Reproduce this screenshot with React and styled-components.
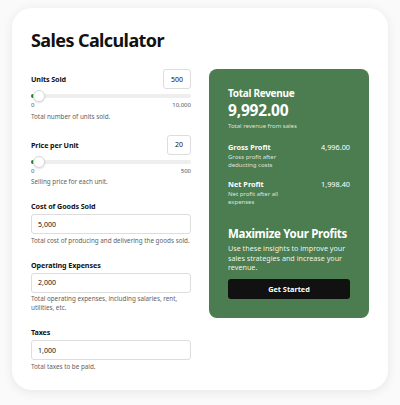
import React from 'react';
import styled, { createGlobalStyle } from 'styled-components';

const GlobalStyle = createGlobalStyle`
  body {
    margin: 0;
    background: #fafafa;
    font-family: "Noto Sans", "Open Sans", sans-serif;
    color: #111;
  }
`

const Page = styled.div`
  width: 400px;
  height: 405px;
  padding: 8px 12px;
  box-sizing: border-box;
`

const Card = styled.div`
  width: 376px;
  height: 382px;
  box-sizing: border-box;
  background: #fff;
  border-radius: 20px;
  box-shadow: 0 2px 12px rgba(0, 0, 0, 0.08);
  padding: 20px 19px;
`

const Title = styled.h1`
  margin: 0 0 17px;
  font-size: 18px;
  line-height: 24px;
  font-weight: 700;
  letter-spacing: -0.6px;
`

const Grid = styled.div`
  display: grid;
  grid-template-columns: 160px 160px;
  column-gap: 18px;
  align-items: start;
`

const Column = styled.div`
  display: flex;
  flex-direction: column;
  gap: 14px;
`

const Field = styled.div`
  display: flex;
  flex-direction: column;
`

const HeaderRow = styled.div`
  display: flex;
  justify-content: space-between;
  align-items: center;
  height: 20px;
`

const Label = styled.div`
  font-size: 7.2px;
  font-weight: 700;
  line-height: 12px;
  letter-spacing: -0.1px;
  margin-bottom: ${p => (p.$spaced ? '2px' : '0')};
`

const SmallInput = styled.div`
  width: ${p => p.$w}px;
  height: 20px;
  box-sizing: border-box;
  border: 1px solid #ddd;
  border-radius: 3px;
  display: flex;
  align-items: center;
  justify-content: center;
  font-size: 7px;
`

const WideInput = styled.div`
  height: 20px;
  box-sizing: border-box;
  border: 1px solid #ddd;
  border-radius: 3px;
  display: flex;
  align-items: center;
  padding: 0 6px;
  font-size: 7px;
`

const Slider = styled.div`
  position: relative;
  height: 10px;
  margin-top: 2px;
  display: flex;
  align-items: center;
`

const Track = styled.div`
  width: 100%;
  height: 4px;
  border-radius: 2px;
  background: #eee;
  overflow: hidden;
`

const Fill = styled.div`
  height: 100%;
  background: #2e7d32;
`

const Thumb = styled.div`
  position: absolute;
  top: -1px;
  width: 12px;
  height: 12px;
  box-sizing: border-box;
  border-radius: 50%;
  background: #fff;
  border: 1px solid #d8d8d8;
  box-shadow: 0 1px 2px rgba(0, 0, 0, 0.12);
`

const Scale = styled.div`
  display: flex;
  justify-content: space-between;
  font-size: 6px;
  line-height: 8px;
  color: #555;
`

const Help = styled.div`
  font-size: 6.3px;
  line-height: 9px;
  color: #5f5f5f;
  margin-top: ${p => p.$mt || 1.5}px;
`

const Panel = styled.div`
  background: #4b7d50;
  border-radius: 8px;
  padding: 18px 19px 19px;
  color: #fff;
  height: 249px;
  box-sizing: border-box;
`

const PanelHeading = styled.div`
  font-size: 10px;
  font-weight: 700;
  line-height: 12px;
  letter-spacing: -0.3px;
`

const BigValue = styled.div`
  margin-top: 2px;
  font-size: 15.5px;
  font-weight: 700;
  line-height: 18px;
  letter-spacing: -0.2px;
`

const PanelNote = styled.div`
  font-size: 6px;
  line-height: 8px;
  color: rgba(255, 255, 255, 0.8);
  margin-top: ${p => p.$mt || 0}px;
`

const StatRow = styled.div`
  display: flex;
  justify-content: space-between;
  margin-top: ${p => p.$mt}px;
`

const StatName = styled.div`
  font-size: 7.3px;
  font-weight: 700;
  line-height: 10px;
`

const StatValue = styled.div`
  font-size: 7.3px;
  line-height: 10px;
`

const StatNote = styled(PanelNote)`
  width: 60px;
  margin-top: 1px;
`

const Promo = styled.div`
  margin-top: 20px;
  font-size: 11.5px;
  font-weight: 700;
  line-height: 16px;
  letter-spacing: -0.3px;
`

const PromoText = styled.p`
  margin: 2px 0 0;
  font-size: 7.2px;
  line-height: 9.7px;
  color: rgba(255, 255, 255, 0.92);
`

const Button = styled.button`
  margin-top: 6px;
  width: 100%;
  height: 20px;
  border: none;
  border-radius: 3px;
  background: #111;
  color: #fff;
  font-family: inherit;
  font-size: 7.3px;
  font-weight: 700;
`

function RangeField({ label, value, min, max, help, boxWidth }) {
  const pct = value / max;
  const thumbLeft = 1 + pct * 20;
  return (
    <Field>
      <HeaderRow>
        <Label>{label}</Label>
        <SmallInput $w={boxWidth}>{value}</SmallInput>
      </HeaderRow>
      <Slider>
        <Track>
          <Fill style={{ width: `${thumbLeft + 6}px` }} />
        </Track>
        <Thumb style={{ left: `${thumbLeft}px` }} />
      </Slider>
      <Scale>
        <span>{min}</span>
        <span>{max.toLocaleString('en-US')}</span>
      </Scale>
      <Help $mt={2.5}>{help}</Help>
    </Field>
  );
}

function InputField({ label, value, help }) {
  return (
    <Field>
      <Label $spaced>{label}</Label>
      <WideInput>{value}</WideInput>
      <Help>{help}</Help>
    </Field>
  );
}

export default function App() {
  return (
    <Page>
      <GlobalStyle />
      <Card>
        <Title>Sales Calculator</Title>
        <Grid>
          <Column>
            <RangeField label="Units Sold" value={500} min={0} max={10000} boxWidth={28} help="Total number of units sold." />
            <RangeField label="Price per Unit" value={20} min={0} max={500} boxWidth={24} help="Selling price for each unit." />
            <InputField label="Cost of Goods Sold" value="5,000" help="Total cost of producing and delivering the goods sold." />
            <InputField label="Operating Expenses" value="2,000" help="Total operating expenses, including salaries, rent, utilities, etc." />
            <InputField label="Taxes" value="1,000" help="Total taxes to be paid." />
          </Column>
          <Panel>
            <PanelHeading>Total Revenue</PanelHeading>
            <BigValue>9,992.00</BigValue>
            <PanelNote $mt={3}>Total revenue from sales</PanelNote>
            <StatRow $mt={12}>
              <div>
                <StatName>Gross Profit</StatName>
                <StatNote>Gross profit after deducting costs</StatNote>
              </div>
              <StatValue>4,996.00</StatValue>
            </StatRow>
            <StatRow $mt={10}>
              <div>
                <StatName>Net Profit</StatName>
                <StatNote>Net profit after all expenses</StatNote>
              </div>
              <StatValue>1,998.40</StatValue>
            </StatRow>
            <Promo>Maximize Your Profits</Promo>
            <PromoText>Use these insights to improve your sales strategies and increase your revenue.</PromoText>
            <Button>Get Started</Button>
          </Panel>
        </Grid>
      </Card>
    </Page>
  );
}
